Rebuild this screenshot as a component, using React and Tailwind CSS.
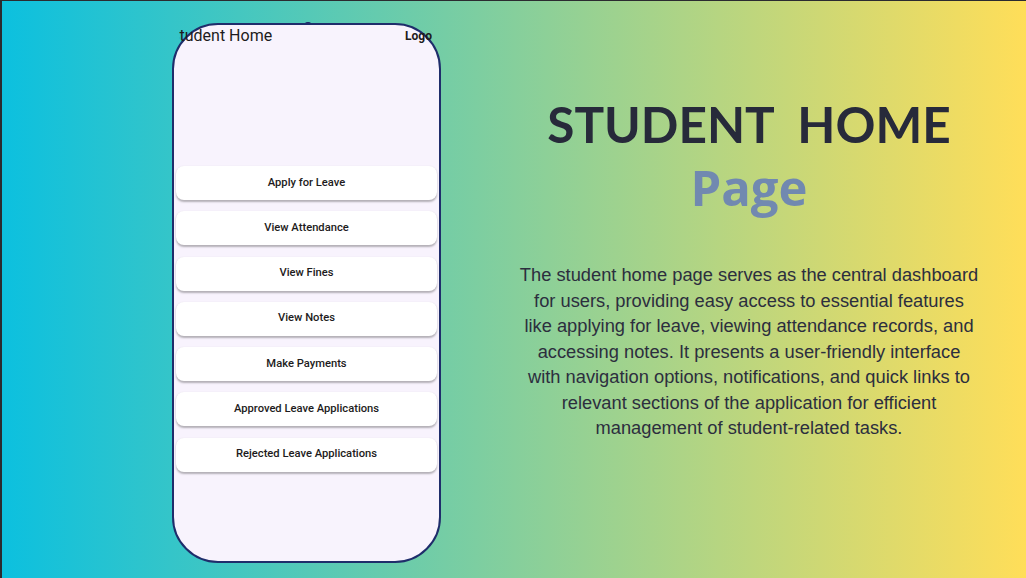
import React from "react";

const items = [
  "Apply for Leave",
  "View Attendance",
  "View Fines",
  "View Notes",
  "Make Payments",
  "Approved Leave Applications",
  "Rejected Leave Applications",
];

export default function App() {
  return (
    <div
      className="w-[1026px] h-[578px] overflow-hidden flex border-t border-t-[#2b2b30] border-l-2 border-l-[#2b2b30] bg-[linear-gradient(90deg,#0cc0df_0%,#ffde59_100%)]"
    >
      <div className="relative ml-[170px] mt-[22px] w-[269px] h-[540px] shrink-0 rounded-[46px] border-2 border-[#1f2d6b] bg-[#f8f3fd]">
        <div className="absolute left-[131px] top-[-3px] w-[6px] h-[2px] bg-[#1f2d6b] rounded-t" />
        <div className="mt-[1px] ml-[5px] mr-[7px] h-[20px] overflow-hidden flex items-center justify-between">
          <span className="ml-[-9px] text-[16px] leading-[20px] text-[#1d1b20] whitespace-nowrap font-['Roboto',sans-serif]">
            Student Home
          </span>
          <span className="mr-[0px] text-[12px] font-bold text-[#1d1b20] whitespace-nowrap font-['Roboto',sans-serif]">
            Logo
          </span>
        </div>
        <div className="mt-[120px] mx-[2px] flex flex-col gap-[11.3px]">
          {items.map((t) => (
            <div
              key={t}
              className="h-[34px] rounded-[8px] bg-white shadow-[0_1.5px_2px_rgba(0,0,0,0.28)] flex items-center justify-center text-[11.2px] font-medium text-[#1d1b20] font-['Roboto',sans-serif]"
            >
              {t}
            </div>
          ))}
        </div>
      </div>
      <div className="flex-1 pl-[31px] flex flex-col items-center">
        <div className="mt-[93px] text-[49.5px] leading-[60px] font-bold text-[#272a3a] whitespace-pre font-['Lato',sans-serif]">
          {"STUDENT  HOME"}
        </div>
        <div className="mt-[3px] text-[49px] leading-[60px] font-bold text-[#7189b0] font-['Open_Sans',sans-serif]">
          Page
        </div>
        <p className="mt-[45px] text-center text-[18.3px] leading-[25.5px] text-[#2c2e3e] font-['Liberation_Sans',Arial,sans-serif]">
          The student home page serves as the central dashboard
          <br />
          for users, providing easy access to essential features
          <br />
          like applying for leave, viewing attendance records, and
          <br />
          accessing notes. It presents a user-friendly interface
          <br />
          with navigation options, notifications, and quick links to
          <br />
          relevant sections of the application for efficient
          <br />
          management of student-related tasks.
        </p>
      </div>
    </div>
  );
}
